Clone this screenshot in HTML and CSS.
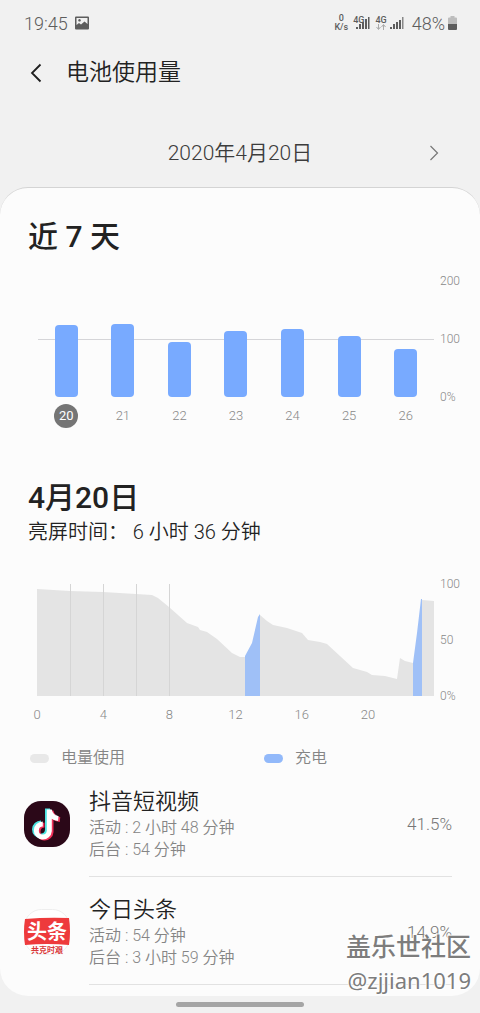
FILE: index.html
```
<!DOCTYPE html>
<html lang="zh-CN">
<head>
<meta charset="utf-8">
<meta name="viewport" content="width=device-width, initial-scale=1">
<title>电池使用量</title>
<link rel="stylesheet" href="styles.css">
</head>
<body>
<div class="status">
  <span class="clock">19:45</span>
  <svg class="shot" width="14" height="14" viewBox="0 0 14 14"><path fill="#5d5d5d" fill-rule="evenodd" d="M1 0.5h12a1 1 0 0 1 1 1v11a1 1 0 0 1-1 1H1a1 1 0 0 1-1-1v-11a1 1 0 0 1 1-1zM1.500 2v7l2.500-2 2 1.500 3.500-3 3 2.500V2zM4.500 3a1.300 1.300 0 1 0 .01 0z"/></svg>
  <span class="speed"><span>0</span><span>K/s</span></span>
  <span class="net">
    <span class="gen">4G</span>
    <svg width="14" height="14" viewBox="0 0 14 14" fill="#5d5d5d"><path d="M0 11h2v2H0zM3 8h2v5H3zM6 6h2v7H6zM9 3h2v10H9zM12 1h1.500v12H12z"/></svg>
  </span>
  <span class="net second">
    <span class="gen">4G</span>
    <svg class="arrows" width="10" height="6" viewBox="0 0 10 6" fill="none" stroke="#aaa"><path d="M2.500 0v5M.5 3l2 2.500 2-2.500M7.500 6V1M5.500 3l2-2.500 2 2.500"/></svg>
    <svg width="14" height="14" viewBox="0 0 14 14" fill="#5d5d5d"><path d="M0 11h2v2H0zM3 8h2v5H3zM6 6h2v7H6zM9 4h2v9H9z"/><path fill="#888" d="M12 1h1.500v12H12z"/></svg>
  </span>
  <span class="percent">48%</span>
  <svg width="9" height="14" viewBox="0 0 9 14"><path fill="#bdbdbd" d="M2.500 0h4v1.500H8a1 1 0 0 1 1 1V8H0V2.500a1 1 0 0 1 1-1h1.500z"/><path fill="#5d5d5d" d="M0 8h9v5a1 1 0 0 1-1 1H1a1 1 0 0 1-1-1z"/></svg>
</div>

<header class="header">
  <button class="back" aria-label="返回"><svg width="12" height="20" viewBox="0 0 12 20" fill="none" stroke="#1f1f1f" stroke-width="1.800"><path d="M10.500 1.500 2 10l8.500 8.500"/></svg></button>
  <h1 class="title">电池使用量</h1>
</header>

<nav class="date">
  <span class="date-text">2020年4月20日</span>
  <button class="next" aria-label="下一天"><svg width="10" height="16" viewBox="0 0 10 16" fill="none" stroke="#777" stroke-width="1.200"><path d="M1.500 1 8.500 8l-7 7"/></svg></button>
</nav>

<main class="card">
  <section class="section">
    <h2 class="heading">近 7 天</h2>
    <div class="chart week">
      <div class="plot">
        <div class="bars">
          <i class="bar" style="height:62%"></i>
          <i class="bar" style="height:63%"></i>
          <i class="bar" style="height:47%"></i>
          <i class="bar" style="height:57%"></i>
          <i class="bar" style="height:59%"></i>
          <i class="bar" style="height:53%"></i>
          <i class="bar" style="height:41%"></i>
        </div>
        <div class="days">
          <button class="day current">20</button>
          <button class="day">21</button>
          <button class="day">22</button>
          <button class="day">23</button>
          <button class="day">24</button>
          <button class="day">25</button>
          <button class="day">26</button>
        </div>
      </div>
      <div class="scale"><span>200</span><span>100</span><span>0%</span></div>
    </div>
  </section>

  <section class="section">
    <h2 class="heading day-heading">4月20日</h2>
    <p class="screen-time">亮屏时间： 6 小时 36 分钟</p>
    <div class="chart level">
      <div class="plot">
        <svg class="area" viewBox="0 0 397 112" preserveAspectRatio="none">
          <path fill="#e4e4e4" d="M0 112V5L33 7 66 8 99 10 115 11 121 14 132 23 150 39 161 43 163 46 170 48 180 55 195 69 203 73H208V112H223V31L230 37 236 41 250 44 265 49 271 56 283 58 290 60 316 84 330 88 335 91 348 92 360 95 363 74 368 77 376 79V112H385V16L397 17V112z"/>
          <path fill="#9fc0f7" d="M208 112V72L215 59 221 33 223 30V112zM376 112V79L380 49 384 15H385V112z"/>
          <path fill="none" stroke="#d5d5d5" d="M33.500 0v112M66.500 0v112M99.500 0v112M132.500 0v112"/>
        </svg>
        <div class="hours"><span>0</span><span>4</span><span>8</span><span>12</span><span>16</span><span>20</span></div>
      </div>
      <div class="scale"><span>100</span><span>50</span><span>0%</span></div>
    </div>
    <div class="legend">
      <span class="key"><i class="pill"></i>电量使用</span>
      <span class="key"><i class="pill charge"></i>充电</span>
    </div>
  </section>

  <ul class="apps">
    <li class="app">
      <svg class="icon" width="46" height="46" viewBox="0 0 46 46">
        <rect width="46" height="46" rx="17" fill="#2b0818"/>
        <g fill="none" stroke-width="5">
          <path stroke="#4be3e1" d="M23.500 7.500v21.500a6.500 6.500 0 1 1-6.500-7M23.500 8c1 5 4 8 9 8.500"/>
          <path stroke="#f0305a" d="M27 9.500v21.500a6.500 6.500 0 1 1-6.500-7M27 10c1 5 4 8 9 8.500"/>
          <path stroke="#fff" d="M25.300 8.500v21.500a6.500 6.500 0 1 1-6.500-7M25.300 9c1 5 4 8 9 8.500"/>
        </g>
      </svg>
      <div class="info">
        <h3 class="name">抖音短视频</h3>
        <p class="detail">活动 : 2 小时 48 分钟</p>
        <p class="detail">后台 : 54 分钟</p>
      </div>
      <span class="share">41.5%</span>
    </li>
    <li class="app">
      <svg class="icon" width="46" height="46" viewBox="0 0 46 46">
        <rect x=".5" y=".5" width="45" height="45" rx="17" fill="#fff" stroke="#eee"/>
        <path fill="#ee3a3c" d="M1 10Q23 8 45 9Q47 23 45 36Q23 34 1 36Q-1 23 1 10z"/>
        <text class="logo-main" x="23" y="30" text-anchor="middle">头条</text>
        <text class="logo-sub" x="23" y="44" text-anchor="middle">共克时艰</text>
      </svg>
      <div class="info">
        <h3 class="name">今日头条</h3>
        <p class="detail">活动 : 54 分钟</p>
        <p class="detail">后台 : 3 小时 59 分钟</p>
      </div>
      <span class="share">14.9%</span>
    </li>
  </ul>
</main>

<footer class="gesture"><i class="handle"></i></footer>
<div class="watermark"><span class="forum">盖乐世社区</span><span class="user">@zjjian1019</span></div>
</body>
</html>
```
FILE: styles.css
```
* { box-sizing: border-box; }
body {
  margin: 0;
  min-height: 100vh;
  display: flex;
  flex-direction: column;
  position: relative;
  background: #f1f1f1;
  color: #222;
  font-family: Roboto, "Noto Sans CJK SC", sans-serif;
}
h1, h2, h3, p, ul { margin: 0; padding: 0; font-weight: 400; }
button { padding: 0; border: 0; background: none; color: inherit; font: inherit; }
svg { display: block; flex: none; }

.status {
  display: flex;
  align-items: center;
  height: 46px;
  padding: 0 23px 0 24px;
  color: #5d5d5d;
}
.clock { font-size: 18px; font-weight: 350; }
.shot { margin-left: 7px; }
.speed {
  display: flex;
  flex-direction: column;
  align-items: center;
  margin-left: auto;
  font-size: 9px;
  line-height: 9px;
  font-weight: 500;
}
.net { display: flex; align-items: center; margin-left: 5px; position: relative; }
.net .gen { font-size: 9px; line-height: 9px; font-weight: 500; align-self: flex-start; margin-right: -8px; }
.second .gen { margin-right: 3px; }
.arrows { position: absolute; left: 1px; bottom: 0; }
.percent { margin: 0 3px 0 8px; font-size: 18px; font-weight: 350; }

.header { display: flex; align-items: center; height: 52px; padding: 1px 30px 0; }
.back { display: flex; width: 36px; }
.title { font-size: 23px; line-height: 32px; font-weight: 350; }

.date {
  display: grid;
  grid-template-columns: 1fr auto 1fr;
  align-items: center;
  height: 68px;
  margin-top: 21px;
  padding: 0 41px;
}
.date-text { grid-column: 2; font-size: 21px; line-height: 28px; font-weight: 350; color: #3c3c3c; }
.next { justify-self: end; }

.card {
  flex: 1;
  overflow: hidden;
  padding: 29px 0 11px;
  border-top: 1px solid #d4d4d4;
  border-radius: 28px;
  background: #fcfcfc;
}
.section { padding: 0 20px 0 28px; }
.heading { font-size: 30px; line-height: 40px; font-weight: 500; }

.chart { display: flex; gap: 6px; padding-left: 9px; }
.plot { flex: 1; min-width: 0; }
.scale {
  display: flex;
  flex-direction: column;
  justify-content: space-between;
  width: 20px;
  margin-top: -8px;
  font-size: 12px;
  line-height: 16px;
  font-weight: 300;
  color: #888;
}
.week { margin-top: 24px; padding-left: 10px; }
.week .scale { height: 132px; }
.bars {
  display: grid;
  grid-template-columns: repeat(7, 1fr);
  align-items: end;
  justify-items: center;
  height: 116px;
  background: linear-gradient(#d5d5d8, #d5d5d8) center / 100% 1px no-repeat;
}
.bar { width: 23px; border-radius: 4px; background: #78aaff; }
.days {
  display: grid;
  grid-template-columns: repeat(7, 1fr);
  justify-items: center;
  margin-top: 7px;
}
.day { width: 24px; height: 24px; font-size: 13px; line-height: 24px; font-weight: 300; color: #888; }
.current { border-radius: 50%; background: #757575; color: #fff; font-weight: 400; }

.day-heading { margin-top: 50px; }
.screen-time { font-size: 20px; line-height: 28px; font-weight: 350; }
.level { margin-top: 38px; }
.level .scale { height: 128px; }
.area { width: 100%; height: 112px; }
.hours {
  display: grid;
  grid-template-columns: repeat(6, 1fr);
  margin: 11px 33px 0 -33px;
  font-size: 13px;
  line-height: 16px;
  font-weight: 300;
  text-align: center;
  color: #888;
}
.legend {
  display: grid;
  grid-template-columns: 1fr 1fr;
  gap: 18px;
  margin: 24px -20px 0 2px;
  font-size: 16px;
  line-height: 22px;
  font-weight: 350;
  color: #858585;
}
.key { display: flex; align-items: center; gap: 12px; }
.pill { width: 19px; height: 9px; border-radius: 5px; background: #e8e8e8; }
.charge { background: #92b9fa; }

.apps { list-style: none; }
.app {
  display: flex;
  align-items: center;
  gap: 19px;
  padding: 18px 28px 16px 24px;
  position: relative;
}
.app::after {
  content: "";
  position: absolute;
  left: 89px;
  right: 28px;
  bottom: 0;
  border-bottom: 1px solid #e2e2e2;
}
.info { flex: 1; }
.name { font-size: 22px; line-height: 30px; font-weight: 350; }
.detail { font-size: 16px; line-height: 22px; font-weight: 350; color: #858585; }
.share { font-size: 17px; line-height: 22px; font-weight: 300; color: #777; }
.logo-main { font-size: 20px; font-weight: 700; fill: #fff; }
.logo-sub { font-size: 8px; font-weight: 700; fill: #d9393b; }

.gesture { display: flex; justify-content: center; height: 17px; padding-top: 6px; }
.handle { width: 128px; height: 5px; border-radius: 3px; background: #a5a5a5; }

.watermark {
  position: absolute;
  right: 9px;
  bottom: 18px;
  display: flex;
  flex-direction: column;
  align-items: flex-end;
  color: #7d7d7d;
  text-shadow: 1px 1px 1px #fff, -1px -1px 1px #fff;
}
.forum { font-size: 25px; line-height: 34px; font-weight: 500; }
.user { font-family: "Noto Sans", sans-serif; font-size: 22px; line-height: 30px; }
```
